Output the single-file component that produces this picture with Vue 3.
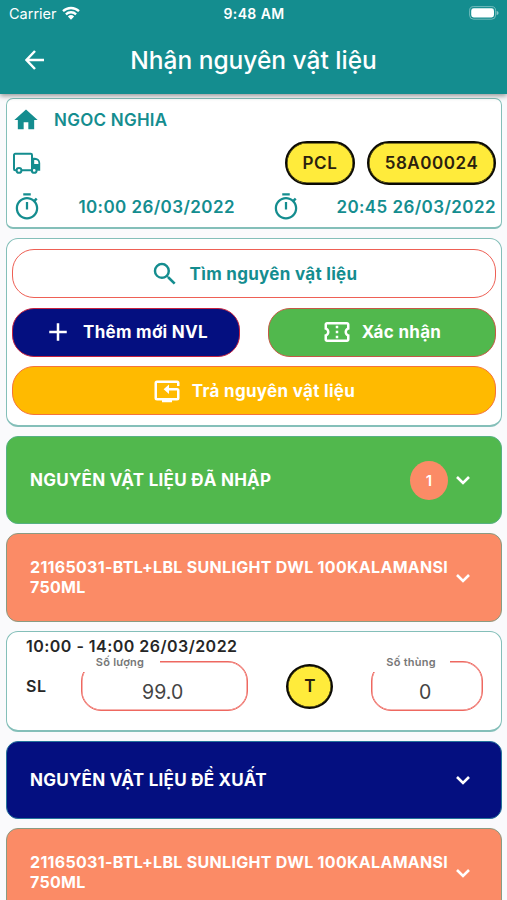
<template>
    <div class="screen">
        <header class="app-header">
            <div class="status-bar">
                <div class="carrier">
                    <span>Carrier</span>
                    <svg class="wifi" viewBox="0 0 18 14">
                        <path d="M1 5.2a11.6 11.6 0 0 1 16 0M3.9 8.3a7.4 7.4 0 0 1 10.2 0" />
                        <path class="dot" d="M5.9 10.4a4.6 4.6 0 0 1 6.2 0L9 13.7z" />
                    </svg>
                </div>
                <span class="time">9:48 AM</span>
                <svg class="battery" viewBox="0 0 30 14">
                    <rect class="shell" x=".6" y=".6" width="26" height="12.6" rx="4" />
                    <rect x="2.2" y="2.3" width="22.8" height="9.2" rx="2.4" />
                    <path class="nub" d="M27.6 4.8q2 .7 2 2.2t-2 2.2z" />
                </svg>
            </div>
            <div class="title-bar">
                <button type="button" class="back">
                    <svg viewBox="0 0 20 20"><path d="M19 10H1.8M10 1 1.4 10l8.6 9" /></svg>
                </button>
                <h1>Nhận nguyên vật liệu</h1>
            </div>
        </header>

        <main>
            <section class="card info">
                <div class="info-row">
                    <svg class="icon home" viewBox="0 0 24 24"><path :d="icons.home" /></svg>
                    <span class="supplier">{{ order.supplier }}</span>
                </div>
                <div class="info-row">
                    <svg class="icon truck" viewBox="0 0 30 30">
                        <path class="line" d="M4.3 22.2H3.2a1.2 1.2 0 0 1-1.2-1.2V7a1.2 1.2 0 0 1 1.2-1.2h15.6A1.2 1.2 0 0 1 20 7v15.2H9.2" />
                        <path fill-rule="evenodd" d="M20 9.8h2.9a5.3 5.3 0 0 1 5.3 5.3v7.7h-2.8a3.5 3.5 0 0 0-5.4-1.5zM22.2 12v4h4.2v-1a3 3 0 0 0-3-3z" />
                        <circle class="line" cx="7" cy="22.4" r="2.4" />
                        <circle class="line" cx="22.2" cy="22.4" r="2.4" />
                    </svg>
                    <span class="pill pcl">{{ order.type }}</span>
                    <span class="pill plate">{{ order.plate }}</span>
                </div>
                <div class="info-row times">
                    <svg class="icon" viewBox="0 0 24 24"><path :d="icons.timer" /></svg>
                    <span class="start">{{ order.start }}</span>
                    <svg class="icon" viewBox="0 0 24 24"><path :d="icons.timer" /></svg>
                    <span class="end">{{ order.end }}</span>
                </div>
            </section>

            <section class="card actions">
                <button type="button" class="btn search">
                    <svg class="icon" viewBox="0 0 24 24"><path :d="icons.search" /></svg>
                    <span>Tìm nguyên vật liệu</span>
                </button>
                <div class="btn-row">
                    <button type="button" class="btn add">
                        <svg class="icon" viewBox="0 0 24 24"><path :d="icons.plus" /></svg>
                        <span>Thêm mới NVL</span>
                    </button>
                    <button type="button" class="btn confirm">
                        <svg class="icon" viewBox="0 0 24 24"><path :d="icons.ticket" /></svg>
                        <span>Xác nhận</span>
                    </button>
                </div>
                <button type="button" class="btn return">
                    <svg class="icon" viewBox="0 0 24 24">
                        <path class="line" d="M21 8V5.6q0-1-1-1H4q-1 0-1 1v12q0 1 1 1h16q1 0 1-1v-6q0-1-1-1h-7" />
                        <path d="M9.3 10.6 13.6 6.8v7.6zM8 18.5h8v2.4H8z" />
                    </svg>
                    <span>Trả nguyên vật liệu</span>
                </button>
            </section>

            <section class="card panel received">
                <span class="panel-title">NGUYÊN VẬT LIỆU ĐÃ NHẬP</span>
                <span class="count">1</span>
                <svg class="chevron" viewBox="0 0 16 10"><path :d="icons.chevron" /></svg>
            </section>

            <section class="card panel material">
                <span class="material-name">{{ material }}</span>
                <svg class="chevron" viewBox="0 0 16 10"><path :d="icons.chevron" /></svg>
            </section>

            <section class="card detail">
                <div class="shift">10:00 - 14:00 26/03/2022</div>
                <div class="fields">
                    <span class="sl">SL</span>
                    <div class="field quantity">
                        <label for="quantity">Số lượng</label>
                        <input id="quantity" type="text" v-model="quantity" />
                    </div>
                    <span class="badge">T</span>
                    <div class="field boxes">
                        <label for="boxes">Số thùng</label>
                        <input id="boxes" type="text" v-model="boxes" />
                    </div>
                </div>
            </section>

            <section class="card panel proposed">
                <span class="panel-title">NGUYÊN VẬT LIỆU ĐỀ XUẤT</span>
                <svg class="chevron" viewBox="0 0 16 10"><path :d="icons.chevron" /></svg>
            </section>

            <section class="card panel material">
                <span class="material-name">{{ material }}</span>
                <svg class="chevron" viewBox="0 0 16 10"><path :d="icons.chevron" /></svg>
            </section>
        </main>
    </div>
</template>

<script setup>
import { ref } from 'vue';

const order = ref({
    supplier: 'NGOC NGHIA',
    type: 'PCL',
    plate: '58A00024',
    start: '10:00 26/03/2022',
    end: '20:45 26/03/2022',
});

const material = '21165031-BTL+LBL SUNLIGHT DWL 100KALAMANSI 750ML';
const quantity = ref('99.0');
const boxes = ref('0');

const icons = {
    home: 'M10 20v-6h4v6h5v-8h3L12 3 2 12h3v8z',
    timer: 'M15 1H9v1.8h6V1zm-3.9 13h1.8V8h-1.8v6zm7.93-6.61 1.42-1.42c-.43-.51-.9-.99-1.41-1.41l-1.42 1.42C16.07 4.74 14.12 4 12 4c-4.97 0-9 4.03-9 9s4.02 9 9 9 9-4.03 9-9c0-2.12-.74-4.07-1.97-5.61zM12 20.2c-3.97 0-7.2-3.23-7.2-7.2s3.23-7.2 7.2-7.2 7.2 3.23 7.2 7.2-3.23 7.2-7.2 7.2z',
    search: 'M15.5 14h-.79l-.28-.27A6.471 6.471 0 0 0 16 9.5 6.5 6.5 0 1 0 9.5 16c1.61 0 3.09-.59 4.23-1.57l.27.28v.79l5 4.99L20.49 19l-4.99-5zm-6 0C7.01 14 5 11.99 5 9.5S7.01 5 9.5 5 14 7.01 14 9.5 11.99 14 9.5 14z',
    plus: 'M19 13h-6v6h-2v-6H5v-2h6V5h2v6h6v2z',
    ticket: 'M22 10V6c0-1.11-.9-2-2-2H4c-1.1 0-1.99.89-1.99 2v4c1.1 0 1.99.9 1.99 2s-.89 2-2 2v4c0 1.1.9 2 2 2h16c1.1 0 2-.9 2-2v-4c-1.1 0-2-.9-2-2s.9-2 2-2zm-2-1.46c-1.19.69-2 1.99-2 3.46s.81 2.77 2 3.46V18H4v-2.54c1.19-.69 2-1.99 2-3.46 0-1.48-.8-2.77-1.99-3.46L4 6h16v2.54zM11 15h2v2h-2zm0-4h2v2h-2zm0-4h2v2h-2z',
    chevron: 'M2 2l6 6 6-6',
};
</script>

<style>
body {
    background: #fafafc;
}
</style>

<style scoped>
.screen {
    height: 900px;
    overflow: hidden;
    background: #fafafc;
    color: #148d8f;
    font-family: Inter, Roboto, sans-serif;
    font-size: 17px;
    font-weight: 600;
}

.app-header {
    position: relative;
    height: 94px;
    background: #148d8f;
    color: #fff;
    box-shadow: 0 2px 5px rgba(0, 0, 0, 0.4);
}

.status-bar {
    display: grid;
    grid-template-columns: 1fr auto 1fr;
    align-items: center;
    height: 27px;
    padding: 0 8px 0 9px;
    font-size: 14px;
}
.time {
    letter-spacing: 0.4px;
}
.carrier {
    display: flex;
    align-items: center;
    gap: 5px;
    font-weight: 400;
    font-size: 14.5px;
}
.wifi {
    width: 18px;
    height: 14px;
    margin-top: -2px;
    fill: none;
    stroke: #fff;
    stroke-width: 2.3;
}
.wifi .dot {
    fill: #fff;
    stroke: none;
}
.battery {
    justify-self: end;
    width: 30px;
    height: 14px;
    margin-top: -1px;
    fill: #fff;
}
.battery .shell {
    fill: none;
    stroke: #fff;
    stroke-opacity: 0.4;
}
.battery .nub {
    fill-opacity: 0.5;
}

.title-bar {
    display: grid;
    grid-template-columns: 70px 1fr 70px;
    align-items: center;
    height: 65px;
}
.back {
    display: flex;
    padding: 0 0 0 25px;
    border: none;
    background: none;
}
.back svg {
    width: 20px;
    height: 20px;
    fill: none;
    stroke: #fff;
    stroke-width: 2.5;
}
h1 {
    margin: 0;
    font-size: 24.5px;
    font-weight: 500;
    line-height: 30px;
    text-align: center;
    white-space: nowrap;
}

main {
    display: flex;
    flex-direction: column;
    gap: 9px;
    padding: 4px 5px 0 6px;
}

.card {
    box-sizing: border-box;
    flex: none;
    border: 1px solid #84bfb9;
    border-bottom-width: 2px;
    border-radius: 12px;
    background: #fff;
}

.icon {
    flex: none;
    width: 30px;
    height: 30px;
    fill: currentColor;
}
.icon .line {
    fill: none;
    stroke: currentColor;
    stroke-width: 2;
}

.info {
    height: 131px;
    padding: 0 5px;
    border-radius: 7px;
}
.info-row {
    display: flex;
    align-items: center;
    height: 44px;
}
.info-row:first-child {
    height: 41px;
    padding-bottom: 1px;
}
.info-row:last-child {
    height: 43px;
}
.home {
    width: 28px;
    height: 28px;
}
.supplier {
    margin-left: 14px;
    letter-spacing: 0.25px;
}
.pill {
    display: flex;
    align-items: center;
    justify-content: center;
    box-sizing: border-box;
    height: 44px;
    border: 2px solid #0b0a04;
    border-radius: 22px;
    background: #ffeb3b;
    box-shadow: inset 0 0 0 0.5px #0b0a04;
    color: #2b210e;
    letter-spacing: 0.55px;
}
.pcl {
    width: 70px;
    margin: 0 12px 0 auto;
}
.plate {
    width: 129px;
}
.start,
.end {
    letter-spacing: 0.42px;
}
.start {
    width: 193px;
    text-align: right;
}
.times .icon:nth-of-type(2) {
    margin-left: 36px;
}
.end {
    margin-left: auto;
}

.actions {
    display: flex;
    flex-direction: column;
    gap: 9.5px;
    height: 189px;
    padding: 10px 5px 0;
}
.btn-row {
    display: flex;
    justify-content: space-between;
}
.btn {
    display: flex;
    align-items: center;
    justify-content: center;
    gap: 10px;
    box-sizing: border-box;
    width: 100%;
    height: 49px;
    padding: 0 1px 0 0;
    border: 1px solid #ee6055;
    border-radius: 22px;
    color: #fff;
    font: inherit;
    font-weight: 700;
    letter-spacing: 0.3px;
}
.btn-row .btn {
    width: 228px;
}
.search {
    background: #fff;
    color: #148d8f;
}
.add {
    border-color: #c5223f;
    background: #040f80;
}
.confirm {
    border-color: #c45a45;
    background: #51b84d;
}
.return {
    border-color: #f5733a;
    background: #ffba00;
}

.panel {
    display: flex;
    align-items: center;
    height: 88px;
    padding: 0 30px 0 23px;
    color: #fff;
}
.panel-title {
    flex: 1;
    font-size: 17px;
    font-weight: 700;
    letter-spacing: 0.26px;
}
.chevron {
    flex: none;
    width: 16px;
    height: 10px;
    fill: none;
    stroke: #fff;
    stroke-width: 2.6;
}
.received {
    border-color: #55b184;
    border-bottom-width: 1px;
    background: #51b84d;
}
.count {
    display: flex;
    align-items: center;
    justify-content: center;
    width: 38px;
    height: 39px;
    margin-right: 7px;
    border-radius: 50%;
    background: #fb8b66;
    font-size: 15px;
}
.material {
    height: 89px;
    border-color: #899b83;
    border-bottom-width: 1px;
    background: #fb8b66;
}
.material-name {
    flex: 1;
    margin-top: -2px;
    font-size: 16px;
    font-weight: 700;
    line-height: 20px;
    letter-spacing: 0.3px;
}
.proposed {
    height: 78px;
    padding-bottom: 1px;
    border-color: #25749b;
    border-bottom-width: 1px;
    background: #040f80;
}

.detail {
    height: 101px;
    padding: 5px 18px 0 19px;
    color: #262626;
}
.shift {
    font-size: 16px;
    line-height: 19px;
    letter-spacing: 0.47px;
}
.fields {
    display: flex;
    align-items: center;
    height: 50px;
    margin-top: 5px;
}
.sl {
    width: 55px;
    font-size: 16px;
    letter-spacing: 0.7px;
}
.field {
    position: relative;
    box-sizing: border-box;
    height: 50px;
    border: 1px solid #ee6860;
    border-radius: 20px;
    box-shadow: inset 0 0 0 0.5px #ee6860;
}
.quantity {
    width: 168px;
}
.boxes {
    width: 112px;
}
/* the label sits on the outline and opens a notch in it */
.field label {
    position: absolute;
    top: -8px;
    left: -2px;
    box-sizing: border-box;
    width: 80px;
    height: 18px;
    padding-left: 16px;
    background: #fff;
    color: #777;
    font-size: 11px;
    line-height: 17px;
    letter-spacing: 0.25px;
    white-space: nowrap;
}
.field input {
    box-sizing: border-box;
    width: 100%;
    height: 100%;
    padding: 11px 8px 0 4px;
    border: none;
    background: none;
    color: #444;
    font-family: inherit;
    font-size: 19.5px;
    font-weight: 400;
    text-align: center;
}
.badge {
    display: flex;
    align-items: center;
    justify-content: center;
    box-sizing: border-box;
    width: 47px;
    height: 45px;
    margin: 0 38px;
    border: 2px solid #0b0a04;
    border-radius: 50%;
    background: #ffeb3b;
    box-shadow: inset 0 0 0 0.5px #0b0a04;
    color: #2b210e;
}
</style>
